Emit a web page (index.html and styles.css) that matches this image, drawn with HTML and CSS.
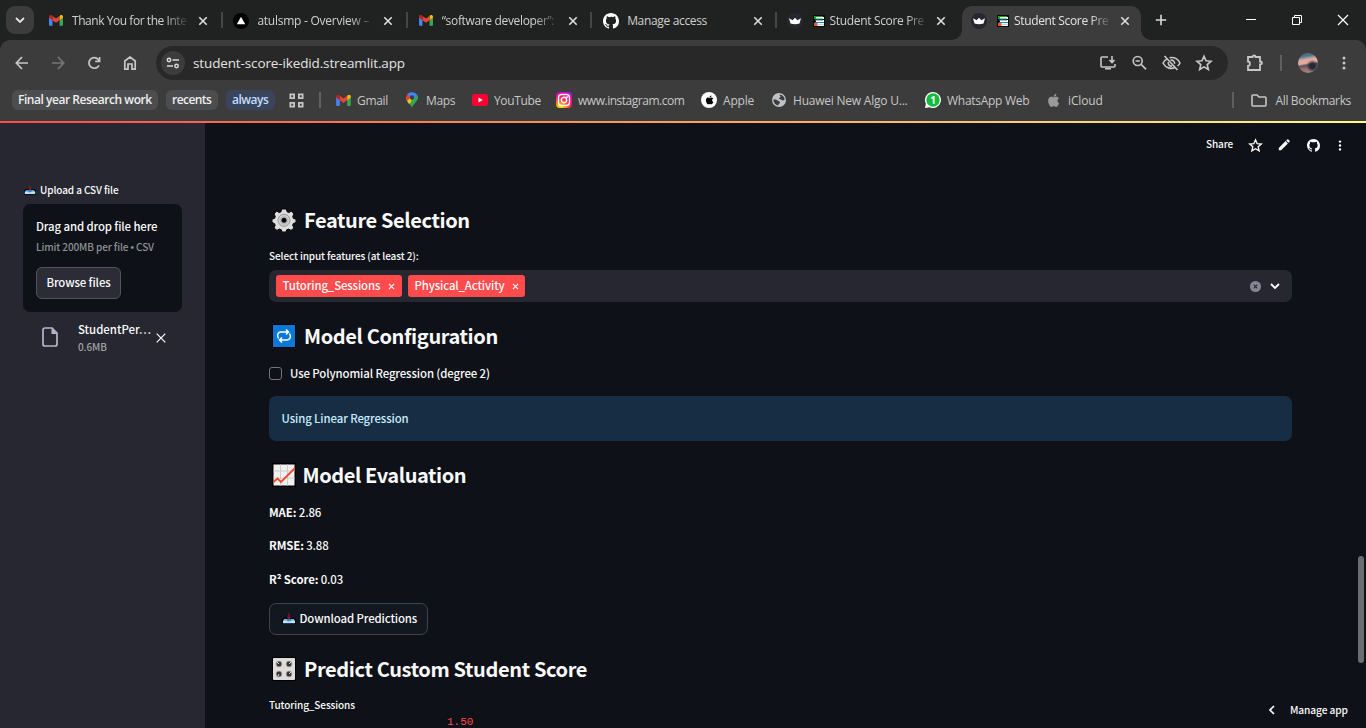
FILE: index.html
```html
<!DOCTYPE html>
<html lang="en">
<head>
<meta charset="utf-8">
<title>Student Score Predictor</title>
<link rel="stylesheet" href="styles.css">
</head>
<body>
<svg class="defs" width="0" height="0">
  <symbol id="gmail" viewBox="0 0 16 12"><path fill="#4285f4" d="M1 12h3V5.2L0 2.3V11a1 1 0 0 0 1 1z"/><path fill="#34a853" d="M12 12h3a1 1 0 0 0 1-1V2.3l-4 2.9z"/><path fill="#fbbc04" d="M12 .8v4.9l4-3V1.800C16 0 14-.6 12.800.2z"/><path fill="#ea4335" d="M4 5.700V.8l4 3 4-3v4.900L8 8.700z"/><path fill="#c5221f" d="M0 1.800v.9l4 3V.8L3.200.2C2-.6 0 0 0 1.800z"/></symbol>
  <symbol id="github" viewBox="0 0 16 16"><path d="M8 0C3.580 0 0 3.580 0 8c0 3.540 2.290 6.530 5.470 7.590.4.070.55-.17.55-.38 0-.19-.01-.82-.01-1.490-2.010.37-2.530-.49-2.690-.94-.09-.23-.48-.94-.82-1.130-.28-.15-.68-.52-.01-.53.63-.01 1.080.58 1.230.82.72 1.210 1.870.87 2.330.66.07-.52.28-.87.51-1.070-1.780-.2-3.640-.89-3.640-3.950 0-.87.31-1.590.82-2.150-.08-.2-.36-1.020.08-2.120 0 0 .67-.21 2.200.82A7.600 7.600 0 0 1 8 3.860c.68 0 1.360.09 2 .27 1.530-1.040 2.200-.82 2.200-.82.44 1.100.16 1.920.08 2.120.51.56.82 1.270.82 2.150 0 3.070-1.870 3.750-3.650 3.950.29.25.54.73.54 1.480 0 1.070-.01 1.930-.01 2.200 0 .21.15.46.55.38A8 8 0 0 0 16 8c0-4.420-3.580-8-8-8z"/></symbol>
  <symbol id="x" viewBox="0 0 10 10"><path d="M1.300 1.300l7.400 7.400M8.700 1.300L1.300 8.700" fill="none" stroke="currentColor" stroke-width="1.600"/></symbol>
  <symbol id="crown" viewBox="0 0 16 16"><circle cx="8" cy="8" r="8" fill="#262730"/><path fill="#fff" d="M2 5.200l3.600 2.100L8 4.800l2.400 2.500L14 5.200 12.500 10.500q-4.500 1.300-9 0z"/></symbol>
  <symbol id="books" viewBox="0 0 12 12"><path fill="#090909" d="M0 0h12v12H0z"/><path fill="#16a51b" d="M1 1h9v3H1z"/><path fill="#fff" d="M3 2h8v2H3zM3 5h8v2H3zM4 8h7v3H4z"/><path fill="#6fc04a" d="M3 3h7v.7H3z"/><path fill="#188bd0" d="M2 4.600h8v.9H2zM2 7h9v1H2z"/><path fill="#f05315" d="M1 8h3.500v3H1z"/><path fill="#999" d="M5 9.500h6v.6H5z"/></symbol>
  <symbol id="apple" viewBox="0 0 14 16"><path d="M11.200 8.400c0-1.900 1.600-2.800 1.600-2.900-.9-1.300-2.200-1.500-2.700-1.500-1.200-.1-2.200.7-2.800.7S5.800 4 4.900 4C3.600 4 2.400 4.700 1.800 5.800c-1.300 2.200-.3 5.500.9 7.300.6.900 1.400 1.900 2.300 1.800.9 0 1.300-.6 2.400-.6s1.400.6 2.400.6 1.600-.9 2.200-1.800c.7-1 1-2 1-2.100 0 0-1.800-.7-1.800-2.600zM9.400 2.900c.5-.6.800-1.400.7-2.300-.7.1-1.600.5-2.100 1.100-.5.500-.9 1.400-.8 2.200.9.100 1.700-.4 2.200-1z"/></symbol>
  <symbol id="star" viewBox="0 0 24 24"><path fill="none" stroke="currentColor" stroke-width="2.200" d="M12 3l2.700 6.100 6.600.6-5 4.400 1.500 6.500L12 17.200l-5.800 3.400 1.500-6.500-5-4.400 6.600-.6z"/></symbol>
  <symbol id="dots" viewBox="0 0 4 14"><circle cx="2" cy="2" r="1.500"/><circle cx="2" cy="7" r="1.500"/><circle cx="2" cy="12" r="1.500"/></symbol>
  <symbol id="inbox" viewBox="0 0 14 12"><path fill="#080808" d="M2 5.500h10l2 1.500v5H0V7z"/><path fill="#7fc3f2" d="M2.500 7h9l1.500 1.500V11H1V8.500z"/><path fill="#c3e3fb" d="M1 9h12v2.200H1z"/><path fill="#2f86d4" d="M4.500 7h5L8.500 9.300h-3z"/><path fill="#b0141c" d="M6.500 1.500h1V5h1.700L7 7.300 4.800 5h1.700z"/></symbol>
</svg>

<header class="browser">
  <div class="tabs">
    <button class="tabsearch"><svg width="10" height="6" viewBox="0 0 10 6"><path d="M1 1l4 4 4-4" fill="none" stroke="#e3e3e3" stroke-width="1.800"/></svg></button>
    <div class="tab"><svg class="fav gm"><use href="#gmail"/></svg><span class="title t1">Thank You for the Inte</span><svg class="close"><use href="#x"/></svg></div>
    <div class="tab"><svg class="fav" viewBox="0 0 16 16"><circle cx="8" cy="8" r="8"/><path fill="#fff" d="M8 3.800l4.200 7.400H3.800z"/></svg><span class="title t2">atulsmp - Overview –</span><svg class="close"><use href="#x"/></svg></div>
    <div class="tab g"><svg class="fav gm"><use href="#gmail"/></svg><span class="title t3">“software developer”:</span><svg class="close"><use href="#x"/></svg></div>
    <div class="tab g"><svg class="fav white"><use href="#github"/></svg><span class="title t4">Manage access</span><svg class="close"><use href="#x"/></svg></div>
    <div class="tab last"><svg class="fav"><use href="#crown"/></svg><svg class="books"><use href="#books"/></svg><span class="title t5">Student Score Pre</span><svg class="close"><use href="#x"/></svg></div>
    <div class="tab active"><svg class="fav"><use href="#crown"/></svg><svg class="books"><use href="#books"/></svg><span class="title t5">Student Score Pre</span><svg class="close"><use href="#x"/></svg></div>
    <svg class="plus" width="12" height="12" viewBox="0 0 12 12"><path d="M6 .8v10.400M.8 6h10.400" stroke="#dadada" stroke-width="1.600"/></svg>
    <div class="window-controls">
      <svg width="12" height="12"><path d="M1 5.500h10" stroke="#fff"/></svg>
      <svg width="12" height="12"><path d="M1.500 3.500h7v7h-7zM3.500 3.500v-2h7v7h-2" fill="none" stroke="#fff"/></svg>
      <svg width="12" height="12"><path d="M1 1l10 10M11 1L1 11" stroke="#fff" stroke-width="1.200"/></svg>
    </div>
  </div>
  <div class="toolbar">
    <nav class="nav">
      <svg width="14" height="14" viewBox="0 0 14 14"><path d="M13 7H1.500M7 1L1.300 7 7 13"/></svg>
      <svg class="dim" width="14" height="14" viewBox="0 0 14 14"><path d="M1 7h11.500M7 1l5.700 6L7 13"/></svg>
      <svg width="14" height="14" viewBox="0 0 14 14"><path d="M12 9.300A5.300 5.300 0 1 1 11.300 3.500L12.500 5M12.600 1v4.400H8.200"/></svg>
      <svg width="14" height="14" viewBox="0 0 14 14"><path d="M1.800 13.200V5L7 1l5.200 4v8.200H9V8H5v5.200z"/></svg>
    </nav>
    <div class="omnibox">
      <span class="site"><svg width="14" height="12" viewBox="0 0 14 12"><g fill="none" stroke="#dadada" stroke-width="1.500"><circle cx="3" cy="3" r="1.700"/><path d="M6.500 3H13M1 9h6"/><circle cx="10.500" cy="9" r="1.700"/></g></svg></span>
      <span class="url">student-score-ikedid.streamlit.app</span>
      <div class="omni-icons">
        <svg width="18" height="16" viewBox="0 0 18 16"><path d="M9 2H3Q2 2 2 3v8q0 1 1 1h12q1 0 1-1V9M13 1v6M10.500 5L13 7.500 15.500 5M6 13.800h6"/></svg>
        <svg width="16" height="16" viewBox="0 0 16 16"><circle cx="6.700" cy="6" r="4.500"/><path d="M10.100 9.400l5 5M4.500 6h4.400"/></svg>
        <svg width="20" height="16" viewBox="0 0 20 16"><path d="M3.500 1l13 14M6.500 3.600C4 4.800 2.500 7 2 8c2.500 5 8 6.500 12 4.500M8.500 2.700c4-.6 8.300 1 10.500 5.300-.5 1.200-1.400 2.200-2.400 3M9.500 5.200c2.500-.6 4.500 1.500 4 3.700M7.300 7.200c-.5 2.300 1.400 4.300 3.700 3.900"/></svg>
        <svg width="18" height="18"><use href="#star"/></svg>
      </div>
    </div>
    <div class="actions">
      <svg width="18" height="18" viewBox="0 0 18 18"><path fill="none" stroke="#c7c7c7" stroke-width="1.800" d="M2 3h4.500c0-2 3-2 3 0H14v4.500c2.500 0 2.500 3 0 3V16H2v-4c2.500 0 2.500-4.500 0-4.500z"/></svg>
      <i class="rule"></i><span class="avatar"></span>
      <svg class="grey" width="4" height="14"><use href="#dots"/></svg>
    </div>
  </div>
  <div class="bookmarks">
    <b class="group g1">Final year Research work</b><b class="group g2">recents</b><b class="group g3">always</b>
    <svg class="apps" width="15" height="15" viewBox="0 0 15 15"><path fill="none" stroke="#c7c7c7" stroke-width="1.800" d="M1.400 1.400h3.700v3.700H1.400zM9.900 1.400h3.700v3.700H9.900zM1.400 9.900h3.700v3.700H1.400zM9.900 9.900h3.700v3.700H9.900z"/></svg>
    <i class="rule r1"></i>
    <span class="bm b1"><svg width="15" height="11"><use href="#gmail"/></svg><span>Gmail</span></span>
    <span class="bm b2"><svg width="12" height="16" viewBox="0 0 12 16"><path fill="#34a853" d="M6 16C5 12 0 10 0 6l12-2c1 5-5 7-6 12z"/><path fill="#fbbc04" d="M1 9l7-8-3 9-2 2z"/><path fill="#ea4335" d="M1.500 2L5 5 1 9C-.3 6.500-.2 4 1.500 2z"/><path fill="#4285f4" d="M1.500 2C4-.8 9.500-.5 11.500 3.500L8 7 4 5z"/><circle cx="6" cy="5.500" r="2.200" fill="#37414c"/></svg><span>Maps</span></span>
    <span class="bm b3"><svg width="16" height="12"><rect width="16" height="12" rx="3" fill="#ff0033"/><path fill="#fff" d="M6.500 3.500l4.300 2.500-4.300 2.500z"/></svg><span>YouTube</span></span>
    <span class="bm b4"><span class="insta"><svg width="16" height="16" fill="none" stroke="#fff" stroke-width="1.400"><rect x="2.500" y="2.500" width="11" height="11" rx="3"/><circle cx="8" cy="8" r="2.700"/><circle cx="11.300" cy="4.700" r=".3"/></svg></span><span>www.instagram.com</span></span>
    <span class="bm b5"><span class="disc"><svg width="9" height="10"><use href="#apple"/></svg></span><span>Apple</span></span>
    <span class="bm b6"><svg width="14" height="14" viewBox="0 0 14 14"><circle cx="7" cy="7" r="7" fill="#bec1c5"/><path fill="#3c3c3c" d="M7.500 1.400c2.700.2 5 2.300 5.100 5.100-1 1-2.400 1.300-3 .2-1-.2-2.300-.2-2.600-1.400.2-1 1.400-.7 1.800-1.300-.3-.8-1.200-1.600-1.300-2.600zM1.400 6.600C3.300 6.500 5 7 6 7.800c.9.700 2.300.8 2 2.200-.8.900-1.500.6-1.700 2.500C3.500 12.300 1.300 9.500 1.400 6.600z"/></svg><span>Huawei New Algo U...</span></span>
    <span class="bm b7"><svg width="16" height="16" viewBox="0 0 16 16"><path fill="#fff" d="M8 0a8 8 0 1 1-3.500 15.200L0 16l.9-4.200A8 8 0 0 1 8 0z"/><circle cx="8" cy="8" r="6.700" fill="#10bd3d"/><text x="5.300" y="12" class="one">1</text></svg><span>WhatsApp Web</span></span>
    <span class="bm b8"><svg class="aple" width="13" height="15"><use href="#apple"/></svg><span>iCloud</span></span>
    <span class="all"><i class="rule"></i><svg width="16" height="13" viewBox="0 0 16 13"><path fill="none" stroke="#c7c7c7" stroke-width="1.600" d="M1 2q0-1 1-1h4l2 2h6q1 0 1 1v7q0 1-1 1H2q-1 0-1-1z"/></svg><span>All Bookmarks</span></span>
  </div>
</header>
<div class="accent"></div>

<div class="app">
  <aside class="sidebar">
    <label class="upload"><svg width="12" height="11"><use href="#inbox"/></svg><span>Upload a CSV file</span></label>
    <section class="dropzone">
      <div class="dz-title">Drag and drop file here</div>
      <div class="dz-limit">Limit 200MB per file <span class="bullet">•</span> CSV</div>
      <button class="browse">Browse files</button>
    </section>
    <div class="file">
      <svg class="doc" width="16" height="20" viewBox="0 0 16 20"><path fill="none" stroke="#b5b7cb" stroke-width="1.700" d="M3 1h7l5 5v11q0 2-2 2H3q-2 0-2-2V3q0-2 2-2z"/><path fill="#b5b7cb" d="M9.500 1v6H15z"/></svg>
      <div class="file-text"><div class="name">StudentPer…</div><div class="size">0.6MB</div></div>
      <svg class="remove" width="10" height="10" viewBox="0 0 10 10"><path d="M.7.7l8.600 8.600M9.300.7L.7 9.300" stroke="#fff" stroke-width="1.200"/></svg>
    </div>
  </aside>
  <main class="main">
    <div class="app-tools"><span class="share">Share</span>
      <svg class="s1" width="15" height="15"><use href="#star"/></svg>
      <svg class="s2" width="12" height="12" viewBox="0 0 12 12"><path d="M.8 8.900L7.600 2.100l2.300 2.300-6.800 6.800H.8zM8.200 1.500L9.300.4q.5-.4 1 0l1.300 1.300q.4.500 0 1L10.500 3.800z"/></svg>
      <svg class="s3" width="13" height="13"><use href="#github"/></svg>
      <svg class="s4" width="4" height="11"><use href="#dots"/></svg>
    </div>
    <div class="content">
      <h2 class="h-feature"><svg class="emoji" viewBox="0 0 24 24"><path fill="#ddd" stroke="#050505" stroke-width="1" d="M9.600 1h4.800l.7 2.800 1.700.8L19.400 3 22 6l-1.300 2.500.8 2L24 11v3.500l-2.700 1-.7 1.700L22 20l-3 2.400-2.500-1.300-1.800.7L14 24h-4l-.8-2.300-1.800-.7L5 22.400 2 20l1.200-2.800-.8-1.700L0 14.500V11l2.500-.6.8-1.900L2 6l2.700-3 2.600 1.600 1.700-.8z"/><circle cx="12" cy="12.300" r="6" fill="#cfd0d0" stroke="#888" stroke-width=".8"/><circle cx="12" cy="12.300" r="4.200" fill="#bbb"/><circle cx="12" cy="12.300" r="2.500" fill="#080808"/></svg><span>Feature Selection</span></h2>
      <div class="label select-label">Select input features (at least 2):</div>
      <div class="select">
        <span class="tag tag1"><span>Tutoring_Sessions</span><svg><use href="#x"/></svg></span>
        <span class="tag tag2"><span>Physical_Activity</span><svg><use href="#x"/></svg></span>
        <span class="select-icons"><svg width="11" height="11" viewBox="0 0 11 11"><circle cx="5.500" cy="5.500" r="5.500" fill="#858795"/><path d="M3.700 3.700l3.600 3.600m0-3.600L3.700 7.300" stroke="#262730" stroke-width="1.100"/></svg><svg width="10" height="7"><path d="M1 1l4 4 4-4" fill="none" stroke="#fff" stroke-width="1.800"/></svg></span>
      </div>
      <h2 class="h-config"><svg class="emoji" viewBox="0 0 24 24"><path fill="#000" d="M0 0h24v24H0z"/><path fill="#0879d8" d="M1 1h22v22H1z"/><path fill="none" stroke="#fff" stroke-width="1.500" d="M6.500 14.500C4.500 11 6 8 9 8h7M14 5.500L16.500 8 14 10.500M17.500 9.500c2 3.500.5 6.500-2.500 6.500H8M10 13.500L7.500 16l2.500 2.500"/></svg><span>Model Configuration</span></h2>
      <label class="check"><i></i><span>Use Polynomial Regression (degree 2)</span></label>
      <div class="alert"><span>Using Linear Regression</span></div>
      <h2 class="h-eval"><svg class="emoji" viewBox="0 0 24 24"><path fill="#000" d="M0 0h24v24H0z"/><path fill="#f1f1f1" d="M1.500 1.500h21v21h-21z"/><path stroke="#ccc" d="M1.500 8h21M1.500 15h21M8.500 1.500v21M15.500 1.500v21"/><path fill="none" stroke="#eb4b2c" stroke-width="1.800" d="M1.500 19L5.500 15.500 9 19 22.500 5.500"/></svg><span>Model Evaluation</span></h2>
      <p class="metric m1"><b>MAE:</b> 2.86</p>
      <p class="metric m2"><b>RMSE:</b> 3.88</p>
      <p class="metric m3"><b>R² Score:</b> 0.03</p>
      <button class="download"><svg width="14" height="12"><use href="#inbox"/></svg><span>Download Predictions</span></button>
      <h2 class="h-predict"><svg class="emoji" viewBox="0 0 24 24"><rect width="24" height="24" rx="2"/><rect x="1" y="1" width="22" height="22" rx="1" fill="#deddda"/><g fill="#333" stroke="#aaa" stroke-width=".8"><circle cx="7" cy="7" r="2.900"/><circle cx="17" cy="7" r="2.900"/><circle cx="7" cy="17" r="2.900"/><circle cx="17" cy="17" r="2.900"/></g><path stroke="#e5e5e5" d="M7 7l-2-2M17 7l2-2M7 17l-1 2M17 17l2-2"/></svg><span>Predict Custom Student Score</span></h2>
      <div class="label slider-label">Tutoring_Sessions</div>
      <div class="slider-value">1.50</div>
    </div>
    <div class="scrollbar"></div>
    <div class="manage"><svg width="7" height="10"><path d="M6 1L2 5l4 4" fill="none" stroke="#fff" stroke-width="1.700"/></svg><span>Manage app</span></div>
  </main>
</div>
</body>
</html>
```
FILE: styles.css
```css
* { box-sizing: border-box; }
body { margin: 0; width: 1366px; height: 728px; overflow: hidden; background: #0e1117; font-family: "Noto Sans CJK SC", sans-serif; font-weight: 500; letter-spacing: -.11px; color: #fafafa; }
svg { display: block; flex: none; }
.defs { position: absolute; }
button { font: inherit; color: inherit; letter-spacing: inherit; padding: 0; }
span, b, button, h2 { white-space: nowrap; }

/* Browser chrome */
.browser { height: 121px; background: #202221; font-family: "Open Sans", sans-serif; font-size: 12px; font-weight: 400; letter-spacing: -.34px; color: #c7c7c7; }
.tabs { height: 40px; display: flex; align-items: center; padding-left: 6px; }
.tabsearch { width: 28px; height: 28px; border: 0; border-radius: 9px; background: #3c3c3c; display: flex; align-items: center; justify-content: center; margin-right: 4px; }
.tab { width: 184.400px; height: 34px; display: flex; align-items: center; padding: 0 14px 5px 11px; position: relative; margin-top: 6px; }
.tab.g { padding-left: 12px; padding-right: 13px; }
.tab::after { content: ""; position: absolute; right: -1px; top: 6px; width: 2px; height: 16px; background: #454746; }
.tab.last::after { display: none; }
.fav { width: 16px; height: 16px; margin-right: 8px; }
.fav.gm { width: 14px; height: 11px; margin-right: 9px; }
.white { fill: #fff; }
.books { width: 12px; height: 12px; margin: 0 5px 0 2px; }
.title { flex: 1; min-width: 0; overflow: hidden; color: #d0d0d0; -webkit-mask-image: linear-gradient(90deg, #000 78%, transparent 100%); mask-image: linear-gradient(90deg, #000 78%, transparent 100%); margin-right: 8px; }
.t1 { letter-spacing: -.45px; }
.t2 { letter-spacing: -.25px; }
.t5 { letter-spacing: -.34px; }
.t4 { mask-image: none; -webkit-mask-image: none; }
.close { width: 10px; height: 10px; color: #dedede; }
.active .title { color: #e3e3e3; }
.active::before { content: ""; position: absolute; z-index: -1; left: 2px; top: 0; width: 179px; height: 34px; border-radius: 10px 10px 0 0; background: #3c3c3c; }
.tab.active::after { z-index: -1; left: -8px; right: auto; top: 24px; width: 199px; height: 10px; background: radial-gradient(circle at 0 0, transparent 9.500px, #3c3c3c 10px) left / 10px 10px no-repeat, radial-gradient(circle at 100% 0, transparent 9.500px, #3c3c3c 10px) right / 10px 10px no-repeat; }
.active { z-index: 1; }
.plus { margin-left: 11px; }
.window-controls { display: flex; gap: 34px; margin-left: auto; margin-right: 17px; }
.toolbar { height: 46px; display: flex; align-items: center; background: #3c3c3c; border-radius: 10px 10px 0 0; padding: 0 20px 0 15px; }
.nav { display: flex; gap: 22px; width: 141px; }
.nav path { fill: none; stroke: #c7c7c7; stroke-width: 1.700; }
.nav .dim { opacity: .42; }
.omnibox { width: 1072px; height: 34px; border-radius: 17px; background: #282828; display: flex; align-items: center; padding: 0 15px 0 5px; }
.site { width: 24px; height: 24px; border-radius: 50%; background: #3c3c3c; display: flex; align-items: center; justify-content: center; margin-right: 8px; }
.url { color: #e3e3e3; font-size: 13.500px; letter-spacing: -.13px; }
.omni-icons { display: flex; align-items: center; gap: 14px; margin-left: auto; }
.omni-icons path, .omni-icons circle { fill: none; stroke: #c7c7c7; stroke-width: 1.600; }
.omni-icons use { color: #c7c7c7; }
.actions { display: flex; align-items: center; flex: 1; padding-left: 18px; }
.rule { width: 2px; height: 16px; background: #606060; flex: none; }
.actions .rule { margin-left: 16px; }
.avatar { width: 20px; height: 20px; border-radius: 50%; margin-left: 16px; background: radial-gradient(circle at 72% 65%, #222835 12%, transparent 32%), linear-gradient(170deg, #477386 18%, #d9aaa6 34%, #e8aa99 50%, #4a5966 58%, #ae6763 73%, #7b9bad); }
.grey { fill: #c7c7c7; margin-left: auto; }
.bookmarks { height: 35px; background: #3c3c3c; display: flex; align-items: center; padding: 0 15px 7px 12px; }
.group { height: 20px; line-height: 20px; padding: 0 6px; border-radius: 6px; background: #4b4d4e; color: #eee; font-weight: 600; margin-right: 8px; }
.g1 { width: 146px; letter-spacing: -.46px; } .g2 { width: 52px; letter-spacing: -.55px; } .g3 { width: 49px; letter-spacing: -.5px; background: #39455a; color: #c5dcff; }
.apps { margin: 0 15px 0 6px; }
.bm { display: flex; align-items: center; gap: 8px; }
.r1 { margin-right: 15px; }
.b1 { width: 70px; gap: 6px; } .b2 { width: 66px; } .b3 { width: 84px; gap: 6px; } .b4 { width: 145px; gap: 6px; letter-spacing: -.48px; } .b5 { width: 71px; gap: 6px; letter-spacing: -.2px; } .b6 { width: 153px; gap: 7px; letter-spacing: -.22px; } .b7 { width: 122px; gap: 6px; letter-spacing: -.28px; } .b8 { gap: 8px; letter-spacing: -.15px; }
.insta { width: 16px; height: 16px; border-radius: 4px; background: radial-gradient(circle at 25% 105%, #ffd600 12%, #ff6a24 35%, #ff1767 55%, #d300c5 80%, #7638fa); }
.disc { width: 16px; height: 16px; border-radius: 50%; background: #fff; display: flex; align-items: center; justify-content: center; fill: #000; }
.one { fill: #fff; font: bold 10px "Open Sans", sans-serif; }
.aple { fill: #999; }
.all { display: flex; align-items: center; margin-left: auto; }
.all .rule { margin-right: 17px; }
.all svg { margin-right: 8px; }
.accent { height: 2px; background: linear-gradient(90deg, #ff4b4b, #ffa25f 52%, #fffd80); }

/* Sidebar */
.app { height: 605px; display: flex; }
.sidebar { width: 205px; background: #262730; padding: 56px 23px 0; font-size: 11.400px; }
.upload { display: flex; align-items: center; height: 20px; font-size: 10px; gap: 4px; padding-left: 1px; }
.dropzone { margin-top: 5px; width: 159px; height: 108px; border-radius: 7px; background: #0e1117; padding: 12px 13px; }
.dz-title { height: 20px; line-height: 20px; white-space: nowrap; }
.dz-limit { height: 21px; line-height: 21px; font-size: 10px; color: #8f9195; white-space: nowrap; }
.bullet { font-family: "Liberation Sans", sans-serif; }
.browse { display: block; margin-top: 10px; width: 85px; height: 32px; border-radius: 6px; border: 1px solid #52535b; background: #2b2c36; padding-bottom: 2px; }
.file { display: flex; align-items: center; padding-left: 19px; height: 50px; }
.file-text { width: 78px; margin-left: 20px; padding-top: 1px; }
.name { height: 18px; line-height: 18px; letter-spacing: 0; }
.size { height: 17px; line-height: 17px; font-size: 10px; color: #a0a2a7; }
.remove { margin-top: 2px; }

/* Main column */
.main { flex: 1; position: relative; font-size: 11.400px; }
.app-tools { height: 44px; display: flex; align-items: center; padding-left: 1001px; font-size: 10px; fill: #fff; }
.share { width: 28px; padding-bottom: 3px; }
.s1 { margin-left: 14px; } .s2 { margin-left: 15px; } .s3 { margin-left: 17px; } .s4 { margin-left: 18px; }
.content { margin-left: 64px; width: 1023px; }
h2 { margin: 0; height: 28px; display: flex; align-items: center; font-size: 20px; line-height: 28px; font-weight: 700; letter-spacing: -.37px; padding-left: 3px; }
h2 span { padding-bottom: 2px; }
.emoji { width: 24px; height: 24px; margin: -2px 8px 0 0; }
.h-feature { margin-top: 40px; }
.h-eval { letter-spacing: -.4px; }
.h-eval .emoji { margin-right: 7px; margin-left: -.5px; }
.label { font-size: 10px; height: 16px; line-height: 16px; white-space: nowrap; }
.select-label { margin-top: 13px; }
.select { height: 32px; margin-top: 6px; border-radius: 7px; background: #262730; display: flex; align-items: center; padding: 0 12px 0 7px; gap: 6px; }
.tag { height: 22px; background: #ff4b4b; border-radius: 3px; display: flex; align-items: center; justify-content: space-between; padding: 0 7px 0 6.500px; letter-spacing: -.13px; }
.tag span { padding-bottom: 2px; }
.tag svg { width: 7px; height: 7px; }
.tag1 { width: 126px; } .tag2 { width: 117px; padding-right: 6px; }
.select-icons { display: flex; align-items: center; gap: 9px; margin-left: auto; }
.h-config { margin-top: 21px; }
.check { display: flex; align-items: center; height: 20px; margin-top: 13px; gap: 8px; }
.check i { width: 13px; height: 13px; border: 1px solid #73757b; border-radius: 3px; margin-top: -1px; }
.check span { padding-bottom: 2px; }
.alert { margin-top: 12px; height: 45px; border-radius: 7px; background: #172d43; color: #c7ebff; display: flex; align-items: center; padding: 0 0 1px 12.500px; }
.h-eval { margin-top: 21px; }
.metric { margin: 0; height: 20px; line-height: 20px; }
.m1 { margin-top: 12px; } .m2 { margin-top: 13px; } .m3 { margin-top: 14px; }
.download { width: 159px; height: 32px; margin-top: 14px; border: 1px solid #41444c; border-radius: 7px; background: #131720; display: flex; align-items: center; gap: 4px; padding: 0 0 2px 11.500px; }
.h-predict { margin-top: 21px; }
.slider-label { margin-top: 13px; }
.slider-value { margin: 2px 0 0 178px; font: 11px/14px "Liberation Mono", monospace; letter-spacing: 0; color: #ff4b4b; }
.scrollbar { position: absolute; right: 2px; top: 433px; width: 6px; height: 107px; border-radius: 3px; background: #6b6c70; }
.manage { position: absolute; left: 1063px; top: 579px; height: 16px; display: flex; align-items: center; gap: 15px; font-size: 10.200px; }
.manage span { padding-bottom: 2px; }
```
